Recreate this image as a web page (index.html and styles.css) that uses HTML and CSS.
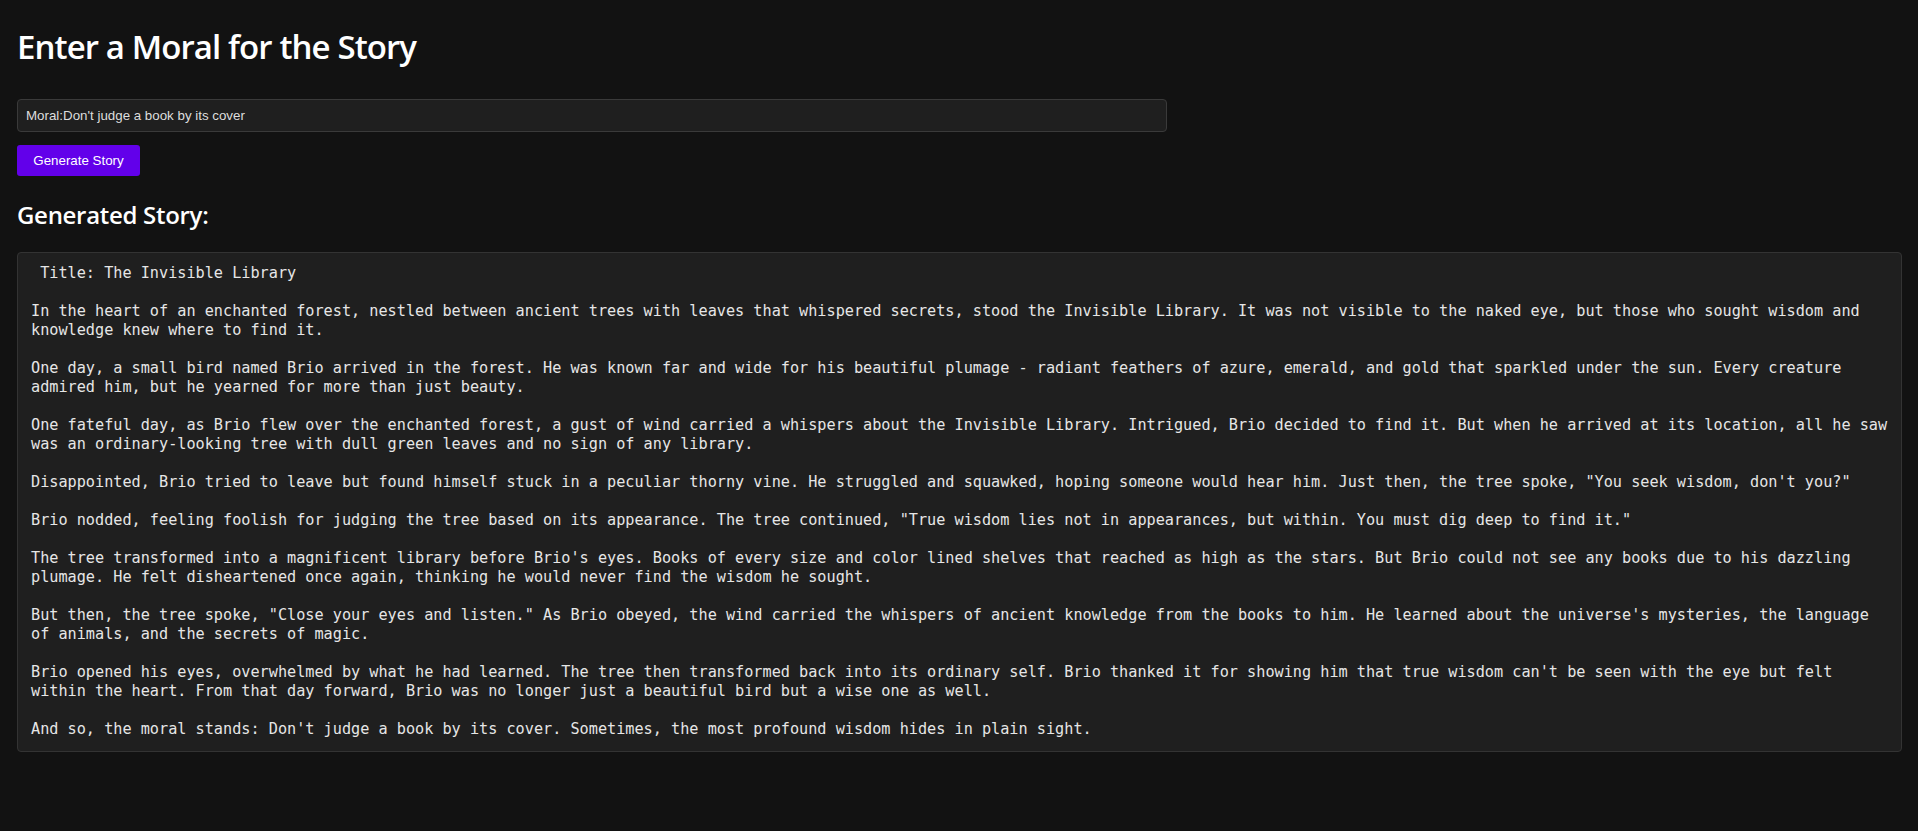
FILE: index.html
```html
<!DOCTYPE html>
<html lang="en">
<head>
<meta charset="utf-8">
<title>Moral Story Generator</title>
<link rel="stylesheet" href="styles.css">
</head>
<body>
<main class="page">
  <h1 class="title">Enter a Moral for the Story</h1>
  <input class="moral-input" type="text" value="Moral:Don't judge a book by its cover">
  <button class="generate-btn" type="button">Generate Story</button>
  <h2 class="subtitle">Generated Story:</h2>
  <pre class="story"> Title: The Invisible Library

In the heart of an enchanted forest, nestled between ancient trees with leaves that whispered secrets, stood the Invisible Library. It was not visible to the naked eye, but those who sought wisdom and
knowledge knew where to find it.

One day, a small bird named Brio arrived in the forest. He was known far and wide for his beautiful plumage - radiant feathers of azure, emerald, and gold that sparkled under the sun. Every creature
admired him, but he yearned for more than just beauty.

One fateful day, as Brio flew over the enchanted forest, a gust of wind carried a whispers about the Invisible Library. Intrigued, Brio decided to find it. But when he arrived at its location, all he saw
was an ordinary-looking tree with dull green leaves and no sign of any library.

Disappointed, Brio tried to leave but found himself stuck in a peculiar thorny vine. He struggled and squawked, hoping someone would hear him. Just then, the tree spoke, "You seek wisdom, don't you?"

Brio nodded, feeling foolish for judging the tree based on its appearance. The tree continued, "True wisdom lies not in appearances, but within. You must dig deep to find it."

The tree transformed into a magnificent library before Brio's eyes. Books of every size and color lined shelves that reached as high as the stars. But Brio could not see any books due to his dazzling
plumage. He felt disheartened once again, thinking he would never find the wisdom he sought.

But then, the tree spoke, "Close your eyes and listen." As Brio obeyed, the wind carried the whispers of ancient knowledge from the books to him. He learned about the universe's mysteries, the language
of animals, and the secrets of magic.

Brio opened his eyes, overwhelmed by what he had learned. The tree then transformed back into its ordinary self. Brio thanked it for showing him that true wisdom can't be seen with the eye but felt
within the heart. From that day forward, Brio was no longer just a beautiful bird but a wise one as well.

And so, the moral stands: Don't judge a book by its cover. Sometimes, the most profound wisdom hides in plain sight.</pre>
</main>
</body>
</html>
```

FILE: styles.css
```css
html, body {
  margin: 0;
  padding: 0;
  background: #121212;
}

body {
  font-family: "Open Sans", "Noto Sans", sans-serif;
  color: #ffffff;
}

.page {
  display: flex;
  flex-direction: column;
  align-items: flex-start;
  padding: 25px 16px 40px 17px;
}

.title {
  margin: 0;
  font-size: 33px;
  line-height: 44px;
  font-weight: 600;
  letter-spacing: -0.9px;
  color: #ffffff;
}

.moral-input {
  box-sizing: border-box;
  margin: 30px 0 0 0;
  width: 1150px;
  height: 33px;
  padding: 0 8px;
  background: #1f1f1f;
  border: 1px solid #3a3a3a;
  border-radius: 4px;
  color: #dddddd;
  font-family: "Liberation Sans", Arial, sans-serif;
  font-size: 13.33px;
  outline: none;
}

.generate-btn {
  box-sizing: border-box;
  margin: 13px 0 0 0;
  width: 123px;
  height: 31px;
  padding: 0;
  background: #6200ea;
  border: none;
  border-radius: 3px;
  color: #ffffff;
  font-family: "Liberation Sans", Arial, sans-serif;
  font-size: 13.33px;
}

.subtitle {
  margin: 24px 0 0 0;
  font-size: 24px;
  line-height: 30px;
  font-weight: 600;
  letter-spacing: -0.3px;
  color: #ffffff;
}

.story {
  box-sizing: border-box;
  align-self: stretch;
  margin: 22px 0 0 0;
  padding: 11px 13px 12px 13px;
  background: #1f1f1f;
  border: 1px solid #333333;
  border-radius: 4px;
  color: #e6e6e6;
  font-family: "DejaVu Sans Mono", "Liberation Mono", monospace;
  font-size: 15.2px;
  line-height: 19px;
  white-space: pre;
  overflow: hidden;
}
```
